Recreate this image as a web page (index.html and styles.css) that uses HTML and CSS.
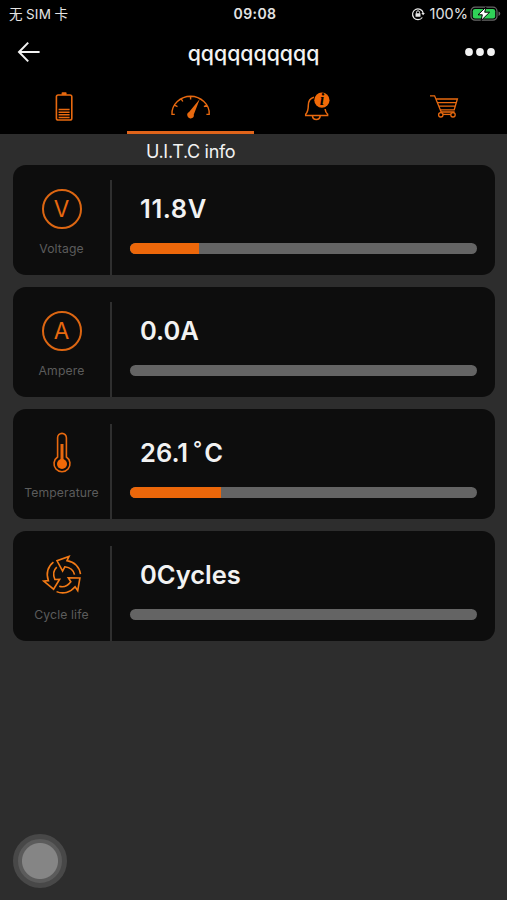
FILE: index.html
```html
<!DOCTYPE html>
<html lang="en">
<head>
  <meta charset="UTF-8" />
  <meta name="viewport" content="width=device-width, initial-scale=1.0" />
  <title>U.I.T.C info</title>
  <link rel="stylesheet" href="styles.css">
</head>

<body>
  <div class="status">
    <span class="carrier">无 SIM 卡</span>
    <span class="clock">09:08</span>
    <div class="power">
      <svg class="lock" width="14" height="14" viewBox="0 0 14 14" fill="none" stroke="#e8e8e8">
        <path d="M11.3 10.5A5.4 5.4 0 1 1 12.2 6" stroke-width="1.2" />
        <path d="M10.3 6h3.6l-1.8 2.3z" fill="#e8e8e8" stroke="none" />
        <rect x="4.5" y="6.2" width="5" height="3.6" rx=".5" fill="#e8e8e8" stroke="none" />
        <path d="M5.5 6.5V5.3a1.5 1.5 0 0 1 3 0v1.2" />
      </svg>
      <span class="percent">100%</span>
      <svg class="charge" width="31" height="16" viewBox="0 0 31 16">
        <rect x="1" y="1.2" width="26" height="13" rx="4" fill="none" stroke="#686868" stroke-width="1.2" />
        <path d="M28.5 5.5q1.8.6 1.8 2.2t-1.8 2.2z" fill="#686868" />
        <rect x="2.8" y="3" width="22.4" height="9.4" rx="2.2" fill="#30d158" />
        <path d="M16 1L8 8.8h4.3l-1.2 5.8 8.5-8.4h-4.9z" fill="#fff" stroke="#000" stroke-width="1" />
      </svg>
    </div>
  </div>

  <div class="nav">
    <svg class="back" width="24" height="22" viewBox="0 0 24 22" fill="none" stroke="#f2f2f2" stroke-width="2">
      <path d="M11.2 1.6L2 11l9.2 9.4M2 11h20.6" />
    </svg>
    <h1>qqqqqqqqqq</h1>
    <svg class="more" width="30" height="8" viewBox="0 0 30 8" fill="#f2f2f2">
      <circle cx="4" cy="4" r="3.9" />
      <circle cx="15" cy="4" r="3.9" />
      <circle cx="26" cy="4" r="3.9" />
    </svg>
  </div>

  <div class="tabs">
    <div class="tab">
      <svg width="40" height="32" viewBox="0 0 40 32" fill="none" stroke="#e8690f">
        <rect x="13.4" y="1" width="15.4" height="25" rx="1.8" stroke-width="1.6" />
        <rect x="18.6" y="-1.8" width="5" height="2.8" rx=".8" fill="#e8690f" stroke="none" />
        <path d="M15.6 15.6h11M15.6 18.2h11M15.6 20.8h11M15.6 23.4h11" stroke-width="1.5" />
      </svg>
    </div>
    <div class="tab active">
      <svg width="40" height="32" viewBox="0 0 40 32" fill="none" stroke="#e8690f" stroke-width="1.4">
        <path d="M4.8 20.4H2C1.4 10.4 10.6 2.2 20.6 2.2s19.2 8.2 18.6 18.2h-2.8M20.6 2.4v3M11.2 4.9l1.6 2.6M4.5 11.2l3 1.4M36.9 11.2l-3 1.4" />
        <path d="M29.8 5l-6 15.4a3.3 3.3 0 1 1-4.7-2.3z" fill="#e8690f" stroke="none" />
      </svg>
    </div>
    <div class="tab">
      <svg width="40" height="32" viewBox="0 0 40 32" fill="none" stroke="#e8690f" stroke-width="1.5">
        <path d="M16.9 3.2c-4 1-5.6 4.3-5.6 8.3 0 4.5-.8 6.8-2.6 8.7v1.3h21.9v-1.3c-1.5-1.4-2.3-2.8-2.5-5.2M15.4 21.8c.6 4.9 7.2 4.9 7.8 0" />
        <circle cx="24.9" cy="6.2" r="7.6" fill="#f26a08" stroke="none" />
        <text class="badge" x="25.1" y="11.4">i</text>
      </svg>
    </div>
    <div class="tab">
      <svg width="40" height="32" viewBox="0 0 40 32" fill="none" stroke="#e8690f" stroke-width="1.3">
        <path d="M6 1.8h4.6l6.6 16.2h13.4M11.8 5h21.6l-3.2 10.8H16.4M13 8.6h19.4M14.4 12.2h17" />
        <circle cx="16.8" cy="20.8" r="2.2" />
        <circle cx="29" cy="20.8" r="2.2" />
        <path d="M19 20.4h7.8" />
      </svg>
    </div>
  </div>

  <h2 class="subtitle">U.I.T.C info</h2>

  <div class="cards">
    <div class="card">
      <div class="kind">
        <div class="icon ring">V</div>
        <span class="label">Voltage</span>
      </div>
      <div class="reading">
        <span class="value wide">11.8V</span>
        <div class="bar"><div class="fill" style="width: 19.9%"></div></div>
      </div>
    </div>

    <div class="card">
      <div class="kind">
        <div class="icon ring">A</div>
        <span class="label">Ampere</span>
      </div>
      <div class="reading">
        <span class="value">0.0A</span>
        <div class="bar"></div>
      </div>
    </div>

    <div class="card">
      <div class="kind">
        <svg class="icon" width="40" height="40" viewBox="0 0 40 40" fill="none" stroke="#e8690f" stroke-width="1.6">
          <path d="M15.6 24V4.8a4.4 4.4 0 0 1 8.8 0V24a8 8 0 1 1-8.8 0z" />
          <path d="M20 11v16" stroke-width="3" />
          <circle cx="20" cy="31" r="5" fill="#f26a08" stroke="none" />
        </svg>
        <span class="label">Temperature</span>
      </div>
      <div class="reading">
        <span class="value">26.1<span class="degree">°</span>C</span>
        <div class="bar"><div class="fill" style="width: 26.2%"></div></div>
      </div>
    </div>

    <div class="card">
      <div class="kind">
        <svg class="icon" width="40" height="40" viewBox="0 0 40 40" fill="none" stroke="#f27a16" stroke-width="1.6">
          <g id="arrow">
            <path d="M38.5 19.2C37.6 12.3 32.6 6.8 25 5.6L27 1.4 15 5.8l5.6 10.2 2.2-4.2c4.8.6 8.8 3.6 9.7 7.8" />
          </g>
          <use href="#arrow" transform="rotate(120 21.5 21)" />
          <use href="#arrow" transform="rotate(240 21.5 21)" />
        </svg>
        <span class="label">Cycle life</span>
      </div>
      <div class="reading">
        <span class="value">0Cycles</span>
        <div class="bar"></div>
      </div>
    </div>
  </div>

  <div class="touch"></div>
</body>
</html>
```
FILE: styles.css
```css
* {
  box-sizing: border-box;
}
body {
  margin: 0;
  min-height: 900px;
  background: #2d2d2d;
  color: #f2f2f2;
  font-family: Inter, "Noto Sans CJK SC", sans-serif;
}
.status {
  display: grid;
  grid-template-columns: 1fr auto 1fr;
  align-items: center;
  height: 28px;
  padding: 0 6px 1px 9px;
  background: #000;
  font-size: 13.5px;
  color: #e4e4e4;
}
.carrier {
  margin-top: -2px;
  word-spacing: -1px;
  letter-spacing: 0.3px;
}
.clock {
  font-size: 14px;
  font-weight: 600;
  letter-spacing: 0.4px;
}
.power {
  display: flex;
  align-items: center;
  justify-content: flex-end;
}
.percent {
  margin: 0 2px 0 5px;
  font-size: 14.5px;
}
.nav {
  display: grid;
  grid-template-columns: 1fr auto 1fr;
  align-items: center;
  height: 48px;
  padding: 0 12px 0 17px;
  background: #000;
}
.nav h1 {
  margin: 2px 5px 0 0;
  font-size: 21.3px;
  font-weight: 500;
}
.more {
  justify-self: end;
}
.tabs {
  display: flex;
  height: 58px;
  background: #000;
}
.tab {
  flex: 1;
  display: flex;
  justify-content: center;
  padding-top: 18px;
  border-bottom: 3px solid transparent;
}
.tab svg {
  overflow: visible;
}
.tab.active {
  border-bottom-color: #e0641a;
}
.badge {
  font: italic bold 16px "Liberation Serif", serif;
  fill: #000;
  stroke: none;
  text-anchor: middle;
}
.subtitle {
  margin: 0 0 0 146px;
  height: 31px;
  font-size: 18px;
  font-weight: 400;
  line-height: 35px;
  letter-spacing: -0.3px;
}
.cards {
  display: grid;
  gap: 12.6px;
  padding: 0 12px 0 13px;
}
.card {
  display: flex;
  height: 109.5px;
  border-radius: 13px;
  background: #0d0d0d;
}
.kind {
  display: flex;
  flex-direction: column;
  align-items: center;
  width: 99px;
  margin-top: 15px;
  padding-top: 9px;
  border-right: 2px solid #2f2f2f;
}
.icon {
  width: 40px;
  height: 40px;
  overflow: visible;
}
.ring {
  border: 2px solid #dc6612;
  border-radius: 50%;
  color: #e8690f;
  font-size: 22.5px;
  line-height: 36px;
  text-align: center;
}
.label {
  margin-top: 12px;
  color: #5c5c5c;
  font-size: 12.2px;
  line-height: 16px;
  letter-spacing: 0.12px;
}
.reading {
  flex: 1;
  padding: 28px 18px 0;
}
.value {
  display: block;
  margin-left: 10px;
  height: 49.5px;
  font-size: 25.5px;
  font-weight: 600;
  line-height: 32px;
}
.wide {
  letter-spacing: 0.6px;
}
.degree {
  margin: 0 2px 0 5px;
  font-size: 20px;
  font-weight: 500;
  vertical-align: 6px;
  line-height: 1;
}
.bar {
  height: 11.3px;
  border-radius: 6px;
  background: #646464;
  overflow: hidden;
}
.fill {
  height: 100%;
  background: #ec670a;
}
.touch {
  position: absolute;
  left: 13px;
  top: 834px;
  width: 54px;
  height: 54px;
  border: 5px solid #484848;
  border-radius: 50%;
  background: radial-gradient(circle, #858585 17.5px, #5b5b5b 18.5px);
}
```
